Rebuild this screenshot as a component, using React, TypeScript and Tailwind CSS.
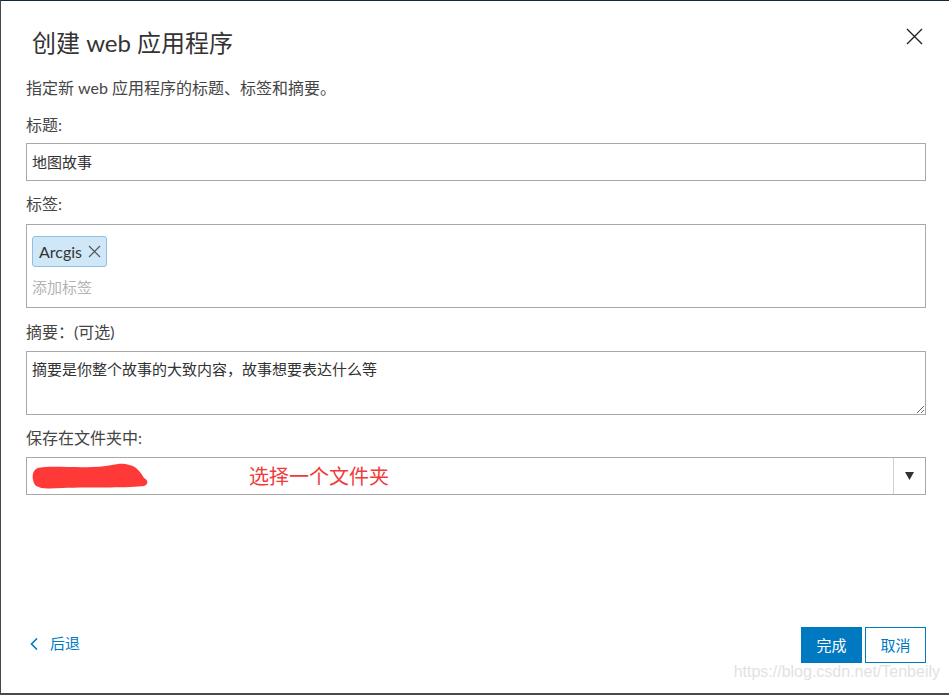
import React from 'react'

const Label = ({ children, className = '' }: { children: React.ReactNode; className?: string }) => (
  <div className={`text-[16px] leading-[20px] text-[#454545] ${className}`}>{children}</div>
)

function CloseIcon() {
  return (
    <svg width="17" height="17" viewBox="0 0 17 17" className="shrink-0">
      <path d="M1 1 L16 16 M16 1 L1 16" stroke="#222" strokeWidth="1.4" fill="none" />
    </svg>
  )
}

function Scribble() {
  return (
    <svg width="117" height="26" viewBox="0 0 117 26" className="shrink-0">
      <path
        d="M4 6 C10 2 40 5 60 4 C70 4 78 2 86 1 C92 0 100 2 104 5 C108 8 110 12 112 15 C116 17 117 21 112 23 C100 25 60 24 30 25 C15 26 4 26 2 20 C0 15 0 9 4 6 Z"
        fill="#ff3838"
      />
    </svg>
  )
}

export default function App(): JSX.Element {
  return (
    <div className="relative flex h-[695px] w-[949px] flex-col border-t border-l border-b-2 border-t-[#0b2a3b] border-l-[#3f4850] border-b-[#4b4b4b] bg-white font-['Lato','Noto_Sans_CJK_SC',sans-serif]">
      <div className="flex items-start justify-between pl-[31px] pr-[26px] pt-[27px]">
        <h1 className="text-[24px] leading-[30px] text-[#333]">创建 web 应用程序</h1>
        <CloseIcon />
      </div>

      <div className="flex flex-col pl-[25px] pr-[23px]">
        <Label className="mt-[20px]">指定新 web 应用程序的标题、标签和摘要。</Label>

        <Label className="mt-[17px]">标题:</Label>
        <div className="mt-[8px] flex h-[38px] items-center border border-[#a8a8a8] pl-[5px] text-[15px] text-[#333]">
          地图故事
        </div>

        <Label className="mt-[13px]">标签:</Label>
        <div className="mt-[10px] h-[84px] border border-[#a8a8a8] pl-[5px] pt-[11px]">
          <div className="inline-flex h-[31px] items-center gap-[6px] rounded-[3px] border border-[#8cc0e4] bg-[#d0e7f8] pl-[6px] pr-[5px] text-[16px] text-[#333]">
            <span>Arcgis</span>
            <svg width="13" height="13" viewBox="0 0 13 13">
              <path d="M1 1 L12 12 M12 1 L1 12" stroke="#555" strokeWidth="1.2" fill="none" />
            </svg>
          </div>
          <div className="mt-[10px] text-[15px] leading-[20px] text-[#b3b3b3]">添加标签</div>
        </div>

        <Label className="mt-[14px]">摘要：(可选)</Label>
        <textarea
          className="mt-[9px] h-[64px] resize-y border border-[#a8a8a8] pl-[5px] pt-[7px] text-[15px] leading-[20px] text-[#333] outline-none"
          defaultValue="摘要是你整个故事的大致内容，故事想要表达什么等"
        />

        <Label className="mt-[13px]">保存在文件夹中:</Label>
        <div className="mt-[9px] flex h-[38px] items-center border border-[#a8a8a8]">
          <div className="flex flex-1 items-center pl-[5px]">
            <Scribble />
            <span className="ml-[100px] text-[20px] leading-[24px] text-[#f03b3b]">选择一个文件夹</span>
          </div>
          <div className="flex h-full w-[32px] items-center justify-center border-l border-[#cfcfcf]">
            <svg width="9" height="8" viewBox="0 0 9 8">
              <path d="M0 0 H9 L4.5 8 Z" fill="#333" />
            </svg>
          </div>
        </div>
      </div>

      <div className="flex-1" />

      <div className="flex items-center justify-between pb-[30px] pl-[29px] pr-[23px]">
        <div className="flex items-center gap-[12px] pb-[3px] text-[15px] text-[#0079c1]">
          <svg width="8" height="12" viewBox="0 0 8 12">
            <path d="M7 0.5 L1.5 6 L7 11.5" stroke="#0079c1" strokeWidth="1.6" fill="none" />
          </svg>
          <span>后退</span>
        </div>
        <div className="flex gap-[3px]">
          <button className="flex h-[36px] w-[61px] items-center justify-center bg-[#0079c1] text-[15px] text-white">
            完成
          </button>
          <button className="flex h-[36px] w-[61px] items-center justify-center border border-[#0079c1] bg-white text-[15px] text-[#0079c1]">
            取消
          </button>
        </div>
      </div>

      <div className="absolute bottom-[9px] right-[9px] font-['Liberation_Sans',sans-serif] text-[16px] text-[#e2e2e2]">
        https://blog.csdn.net/Tenbeily
      </div>
    </div>
  )
}
